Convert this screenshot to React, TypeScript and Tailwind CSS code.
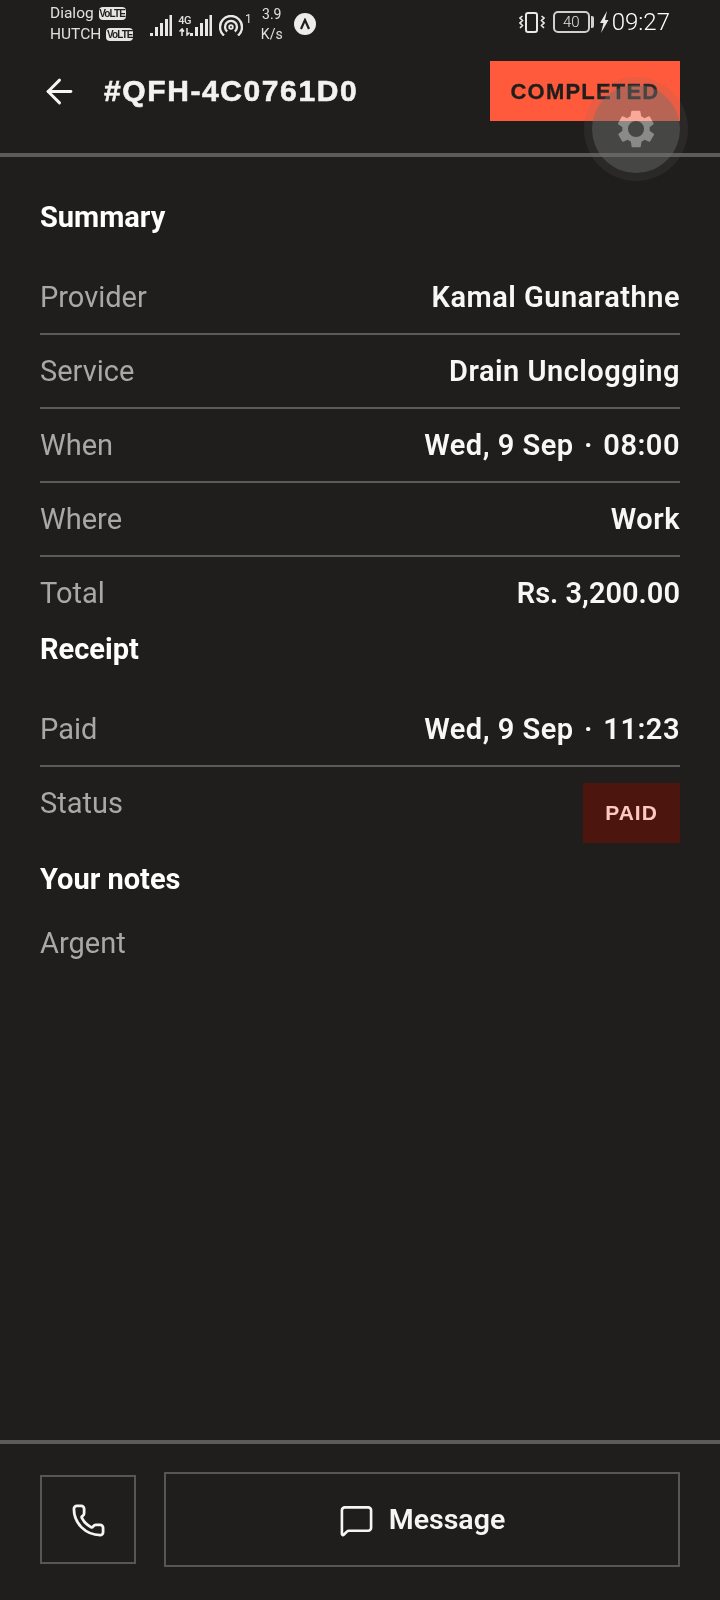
import { ArrowLeft, MessageSquare, Phone } from "lucide-react";

const Row = ({ label, value, border = true, tracked = true }: { label: string; value: string; border?: boolean; tracked?: boolean }) => (
  <div className={`flex items-center justify-between py-4 ${border ? "border-b-2 border-[#5c5b58]" : ""}`}>
    <span className="text-[29px] leading-10 text-[#a9a8a4]">{label}</span>
    <span className={`text-[29px] leading-10 font-semibold text-[#f7f7f6] ${tracked ? "tracking-[0.5px]" : ""}`}>{value}</span>
  </div>
);

const Heading = ({ children, className = "" }: { children: string; className?: string }) => (
  <h2 className={`text-[29px] leading-10 font-bold text-white ${className}`}>{children}</h2>
);

const Volte = () => (
  <span className="flex h-[13px] w-[27px] items-center justify-center rounded-[4px] bg-[#e4e4e4] font-['Liberation_Sans',sans-serif] text-[10px] leading-none font-bold tracking-[-0.9px] text-[#1f1e1c]">
    VoLTE
  </span>
);

const Bars = ({ className = "" }: { className?: string }) => (
  <svg width="22" height="21" viewBox="0 0 22 21" className={className} fill="#e8e8e8">
    <rect x="0" y="18" width="3" height="3" />
    <rect x="5" y="12" width="3" height="9" />
    <rect x="10" y="8" width="3" height="13" />
    <rect x="15" y="4" width="3" height="17" />
    <rect x="19.5" y="0" width="2.5" height="21" />
  </svg>
);

export default function App() {
  return (
    <div className="relative flex h-[1600px] w-[720px] flex-col overflow-hidden bg-[#1f1e1c] font-['Roboto',sans-serif]">
      {/* status bar */}
      <div className="flex h-14 items-start justify-between pt-[3px] pr-[50px] pl-[50px] text-[#e0e0e0]">
        <div className="flex items-center">
          <div className="flex w-[100px] flex-col text-[15.5px] leading-[21px]">
            <div className="flex items-center gap-[5px]">
              Dialog <Volte />
            </div>
            <div className="flex items-center gap-[5px]">
              HUTCH <Volte />
            </div>
          </div>
          <Bars className="mt-[2px]" />
          <div className="mt-[2px] ml-[7px] flex items-end">
            <div className="flex w-[11px] flex-col items-center">
              <span className="text-[11px] leading-[12px] font-medium tracking-[-0.6px]">4G</span>
              <svg width="11" height="8" viewBox="0 0 11 8" fill="none" stroke="#e8e8e8" strokeWidth="1.5" className="mt-[1px]">
                <path d="M3 8V1L.5 3.5M3 1l2 2.5M8 0v7l2.5-2.5" />
              </svg>
            </div>
            <Bars />
          </div>
          <svg width="24" height="21" viewBox="0 0 24 21" className="mt-[2px] ml-[7px]" fill="none" stroke="#e8e8e8" strokeWidth="2.4">
            <path d="M5 20.5a11 11 0 1 1 14 0" />
            <path d="M8.2 16.5a6 6 0 1 1 7.6 0" />
            <circle cx="12" cy="12" r="1.8" strokeWidth="1.8" />
          </svg>
          <span className="mb-[10px] ml-[2px] text-[12px] leading-[14px]">1</span>
          <div className="ml-[8px] flex w-[24px] flex-col items-center text-[14px] leading-[20px]">
            <span>3.9</span>
            <span>K/s</span>
          </div>
          <div className="ml-[10px] flex h-[22px] w-[22px] items-center justify-center rounded-full bg-[#ececec]">
            <svg width="12" height="12" viewBox="0 0 12 12" fill="none" stroke="#1f1e1c" strokeWidth="2.2">
              <path d="M2 11 6 2l4 9" />
            </svg>
          </div>
        </div>
        <div className="mt-[7px] flex items-center">
          <svg width="26" height="21" viewBox="0 0 26 21" fill="none" stroke="#e8e8e8">
            <rect x="7" y="1" width="11" height="19" rx="2" strokeWidth="2" />
            <path strokeWidth="1.6" d="M3.5 4 1 6l2.5 2.5L1 11l2.5 2.5L1 16M22.5 4 25 6l-2.5 2.5L25 11l-2.5 2.5L25 16" />
          </svg>
          <div className="relative ml-[8px] flex h-[22px] w-[37px] items-center justify-center rounded-[5px] border-2 border-[#cfcfcf] text-[15px] leading-none font-light">
            40
          </div>
          <div className="ml-[1px] h-[12px] w-[3px] rounded-r-[2px] bg-[#cfcfcf]" />
          <svg width="10" height="22" viewBox="0 0 10 22" className="ml-[5px]" fill="#e8e8e8">
            <path d="M8 0 1 12h3.5L2 22l7.5-13H6z" />
          </svg>
          <span className="ml-[3px] text-[24px] leading-[24px] font-light text-white">09:27</span>
        </div>
      </div>

      {/* header */}
      <div className="flex items-center justify-between border-b-4 border-[#5c5b58] pt-[5px] pr-10 pb-8 pl-10">
        <div className="flex items-center">
          <ArrowLeft size={39} strokeWidth={1.8} className="text-[#f5f5f4]" />
          <span className="ml-[25px] -translate-y-[1px] font-['Liberation_Sans',sans-serif] text-[30px] font-bold tracking-[1.6px] text-[#f2f2f1] [-webkit-text-stroke:0.6px_#f2f2f1]">
            #QFH-4C0761D0
          </span>
        </div>
        <div className="flex h-[60px] w-[190px] items-center justify-center bg-[#ff5a3c] font-['Liberation_Sans',sans-serif] text-[22px] font-bold tracking-[1.2px] text-[#1f1e1c] [-webkit-text-stroke:0.3px_#1f1e1c]">
          COMPLETED
        </div>
      </div>

      {/* body */}
      <main className="flex-1 px-10 pt-10">
        <Heading className="mb-6">Summary</Heading>
        <Row label="Provider" value="Kamal Gunarathne" />
        <Row label="Service" value="Drain Unclogging" />
        <Row label="When" value={"Wed, 9 Sep\u2004·\u200408:00"} />
        <Row label="Where" value="Work" />
        <Row label="Total" value="Rs. 3,200.00" border={false} tracked={false} />
        <Heading className="mb-6">Receipt</Heading>
        <Row label="Paid" value={"Wed, 9 Sep\u2004·\u200411:23"} />
        <div className="flex items-start justify-between py-4">
          <span className="text-[29px] leading-10 text-[#a9a8a4]">Status</span>
          <div className="flex h-[60px] w-[97px] items-center justify-center bg-[#4c150e] font-['Liberation_Sans',sans-serif] text-[21px] font-bold tracking-[1px] text-[#ffc9c0]">
            PAID
          </div>
        </div>
        <Heading className="mb-6">Your notes</Heading>
        <p className="text-[29px] leading-10 text-[#a9a8a4]">Argent</p>
      </main>

      {/* footer */}
      <div className="flex h-[160px] items-center gap-[28px] border-t-4 border-[#5c5b58] px-10 pb-[5px]">
        <button className="flex h-[89px] w-[96px] items-center justify-center border-2 border-[#575654] pt-[2px]">
          <Phone size={35} strokeWidth={1.9} className="text-[#f5f5f4]" />
        </button>
        <button className="flex h-[95px] flex-1 items-center justify-center gap-[15px] border-2 border-[#575654] pt-[2px] text-[28.5px] font-semibold text-[#f5f5f4]">
          <MessageSquare size={35} strokeWidth={1.8} />
          Message
        </button>
      </div>

      {/* floating assistive button */}
      <div className="absolute top-[77px] left-[584px] flex h-[104px] w-[104px] items-center justify-center rounded-full bg-[#6f6f6f]/[0.14]">
        <div className="flex h-[88px] w-[88px] items-center justify-center rounded-full bg-[#6f6f6f]/[0.41]">
          <svg width="44" height="44" viewBox="0 0 24 24" fill="#444444" className="mix-blend-plus-lighter">
            <path
              fillRule="evenodd"
              d="M19.4 13a7.6 7.6 0 0 0 0-2l2.1-1.6a.5.5 0 0 0 .1-.6l-2-3.5a.5.5 0 0 0-.6-.2l-2.5 1a7.3 7.3 0 0 0-1.7-1l-.4-2.6a.5.5 0 0 0-.5-.5h-4a.5.5 0 0 0-.5.4l-.4 2.7a7.6 7.6 0 0 0-1.7 1l-2.5-1a.5.5 0 0 0-.6.2l-2 3.5a.5.5 0 0 0 .1.6L4.6 11a7.9 7.9 0 0 0 0 2l-2.1 1.6a.5.5 0 0 0-.1.6l2 3.5c.1.2.4.3.6.2l2.5-1c.5.4 1.1.7 1.7 1l.4 2.6c0 .3.2.5.5.5h4c.3 0 .5-.2.5-.4l.4-2.7c.6-.3 1.2-.6 1.7-1l2.5 1c.2.1.5 0 .6-.2l2-3.5a.5.5 0 0 0-.1-.6zM12 16.4a4.4 4.4 0 1 1 0-8.8 4.4 4.4 0 0 1 0 8.8z"
            />
          </svg>
        </div>
      </div>
    </div>
  );
}
